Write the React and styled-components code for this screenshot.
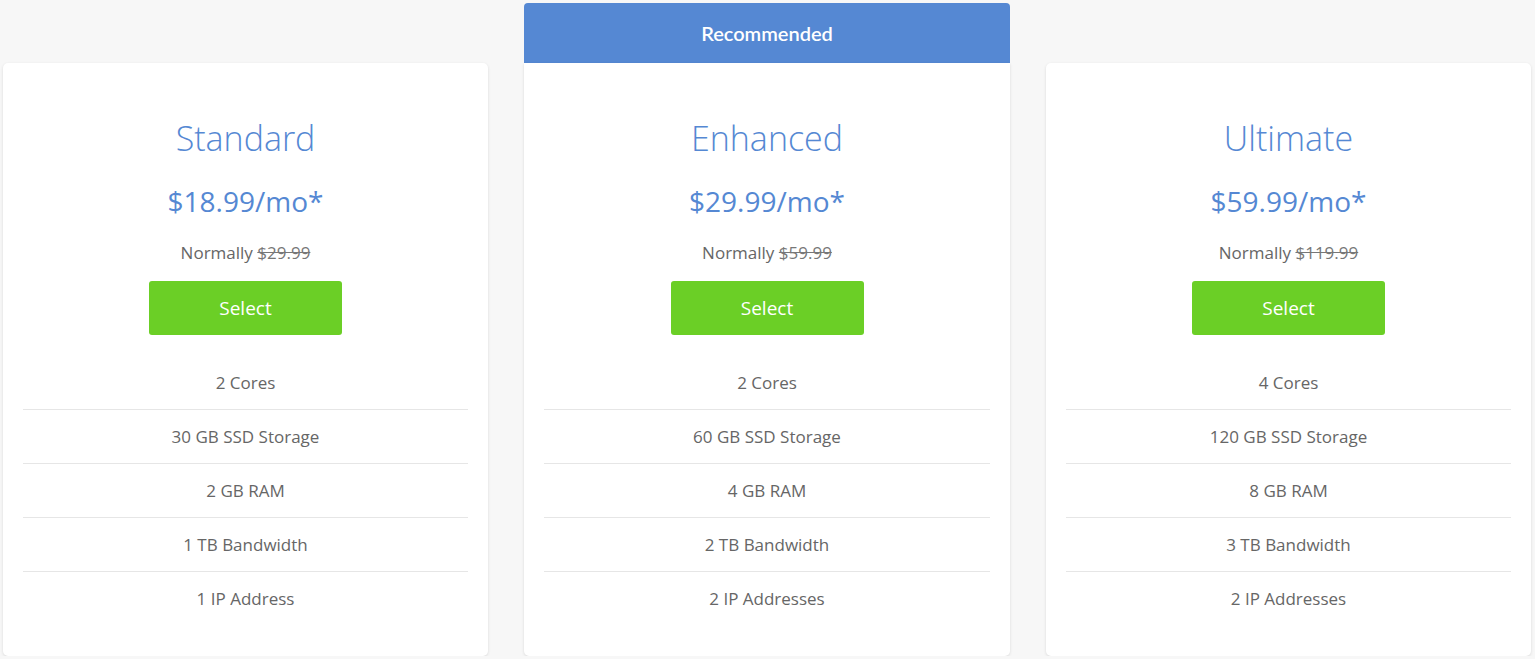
import React from 'react';
import styled, { createGlobalStyle } from 'styled-components';

const GlobalStyle = createGlobalStyle`
  body {
    margin: 0;
    background: #f7f7f7;
    font-family: "Open Sans", "Liberation Sans", sans-serif;
  }
`;

const Grid = styled.div`
  display: grid;
  grid-template-columns: 485px 486px 485px;
  gap: 36px;
  padding: 3px 4px 0 3px;
`;

const Column = styled.div`
  display: flex;
  flex-direction: column;
  padding-top: ${props => (props.$offset ? '60px' : '0')};
`;

const Banner = styled.div`
  height: 60px;
  background: #5588d3;
  border-radius: 4px 4px 0 0;
  color: white;
  display: flex;
  align-items: center;
  justify-content: center;
  font-size: 20px;
  font-weight: 600;
  font-family: "Lato", "Open Sans", sans-serif;
`;

const Card = styled.div`
  background: white;
  border-radius: ${props => (props.$recommended ? '0 0 5px 5px' : '5px')};
  box-shadow: 0 1px 3px rgba(0, 0, 0, 0.12);
  padding: 53px 20px 34px;
  text-align: center;
  height: 593px;
  box-sizing: border-box;
`;

const PlanName = styled.h2`
  margin: 0;
  font-size: 34px;
  line-height: 44px;
  font-weight: 300;
  color: #5588d3;
`;

const Price = styled.div`
  margin-top: 23px;
  font-size: 28px;
  line-height: 36px;
  color: #5588d3;
`;

const Normally = styled.div`
  margin-top: 22px;
  font-size: 17px;
  line-height: 24px;
  color: #666;

  s {
    color: #777;
  }
`;

const SelectButton = styled.button`
  margin-top: 16px;
  width: 193px;
  height: 54px;
  background: #6bcf26;
  color: white;
  border: none;
  border-radius: 3px;
  font-family: inherit;
  font-size: 19px;
  cursor: pointer;
`;

const Features = styled.ul`
  list-style: none;
  margin: 21px 0 0;
  padding: 0;
`;

const Feature = styled.li`
  height: 53px;
  display: flex;
  align-items: center;
  justify-content: center;
  font-size: 17px;
  color: #666;
  & + & {
    border-top: 1px solid #e6e6e6;
  }
`;

const plans = [
  {
    name: 'Standard',
    price: '$18.99/mo*',
    normal: '$29.99',
    features: ['2 Cores', '30 GB SSD Storage', '2 GB RAM', '1 TB Bandwidth', '1 IP Address'],
  },
  {
    name: 'Enhanced',
    price: '$29.99/mo*',
    normal: '$59.99',
    recommended: true,
    features: ['2 Cores', '60 GB SSD Storage', '4 GB RAM', '2 TB Bandwidth', '2 IP Addresses'],
  },
  {
    name: 'Ultimate',
    price: '$59.99/mo*',
    normal: '$119.99',
    features: ['4 Cores', '120 GB SSD Storage', '8 GB RAM', '3 TB Bandwidth', '2 IP Addresses'],
  },
];

const App = () => (
  <>
    <GlobalStyle />
    <Grid>
      {plans.map(plan => (
        <Column key={plan.name} $offset={!plan.recommended}>
          {plan.recommended && <Banner>Recommended</Banner>}
          <Card $recommended={plan.recommended}>
            <PlanName>{plan.name}</PlanName>
            <Price>{plan.price}</Price>
            <Normally>
              Normally <s>{plan.normal}</s>
            </Normally>
            <SelectButton>Select</SelectButton>
            <Features>
              {plan.features.map(f => (
                <Feature key={f}>{f}</Feature>
              ))}
            </Features>
          </Card>
        </Column>
      ))}
    </Grid>
  </>
);

export default App;
